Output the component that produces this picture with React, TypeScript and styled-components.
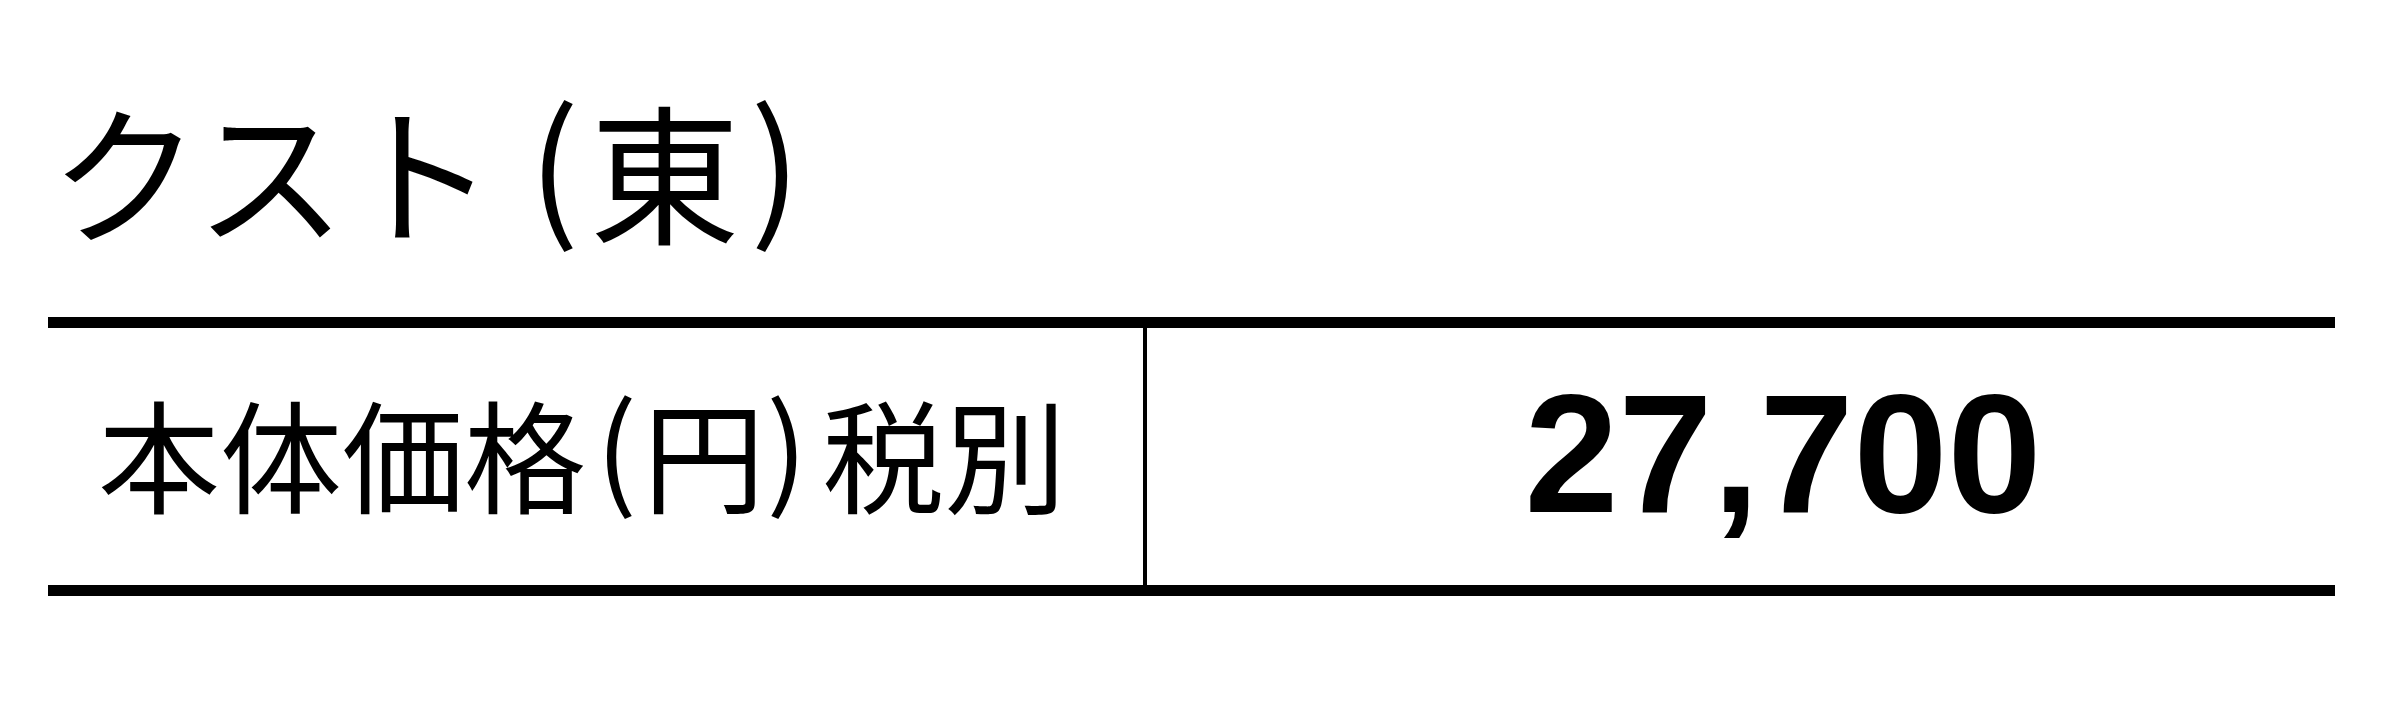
import React, {ReactElement} from 'react';
import styled, {createGlobalStyle} from 'styled-components';

const GlobalStyle = createGlobalStyle`
  html, body {
    margin: 0;
    padding: 0;
    background: #fff;
  }

  body {
    width: 2400px;
    height: 708px;
    overflow: hidden;
    color: #000;
  }
`;

const jp = `'Noto Sans CJK JP', 'Noto Sans', sans-serif`;

const Page = styled.div`
  padding: 93px 65px 0 48px;
`;

const Title = styled.h1`
  margin: 0 0 74px;
  padding-left: 2px;

  font-family: ${jp};
  font-weight: 400;
  font-size: 150px;
  line-height: 150px;
  white-space: nowrap;
`;

// narrow brackets, lifted to sit centred on the kanji
const Paren = styled.span<{$before: number; $after: number}>`
  margin-left: ${({$before}) => $before}em;
  margin-right: ${({$after}) => $after}em;
  line-height: 0;
  vertical-align: 0.07em;
`;

const PriceTable = styled.div`
  display: grid;
  grid-template-columns: 1095px 1fr;

  border-top: 11px solid #000;
  border-bottom: 11px solid #000;
`;

const Cell = styled.div<{$divider?: boolean; $align: 'left' | 'center'}>`
  display: flex;
  align-items: center;
  justify-content: ${({$align}) => $align === 'left' ? 'flex-start' : 'center'};

  height: 257px;
  box-sizing: border-box;
  border-left: ${({$divider}) => $divider ? '4px solid #000' : 'none'};
`;

const Label = styled.span`
  padding: 0 0 12px 50px;

  font-family: ${jp};
  font-size: 122px;
  line-height: 122px;
  white-space: nowrap;
`;

const Price = styled.span`
  padding: 0 0 7px 84px;

  font-family: 'Liberation Sans', Arial, sans-serif;
  font-weight: 700;
  font-size: 169px;
  line-height: 169px;
`;

export default function App(): ReactElement {
  return (
    <>
      <GlobalStyle />
      <Page>
        <Title>
          クスト
          <Paren $before={0.22} $after={0.07}>(</Paren>
          東
          <Paren $before={0.07} $after={0}>)</Paren>
        </Title>
        <PriceTable>
          <Cell $align="left">
            <Label>
              本体価格
              <Paren $before={0.08} $after={0.05}>(</Paren>
              円
              <Paren $before={0.01} $after={0.12}>)</Paren>
              税別
            </Label>
          </Cell>
          <Cell $align="center" $divider>
            <Price>27,700</Price>
          </Cell>
        </PriceTable>
      </Page>
    </>
  );
}
